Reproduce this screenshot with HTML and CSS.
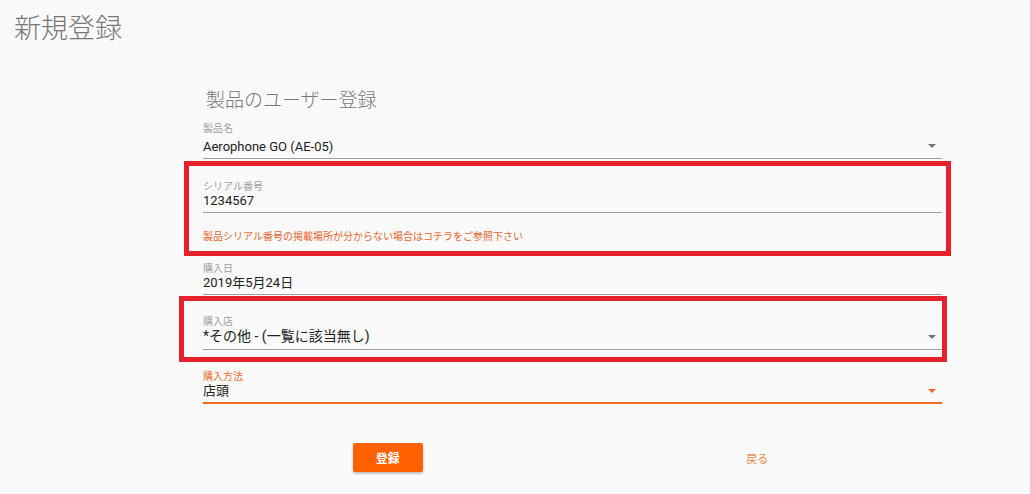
FILE: index.html
```html
<!DOCTYPE html>
<html lang="ja">
<head>
  <meta charset="UTF-8">
  <meta name="viewport" content="width=device-width, initial-scale=1.0">
  <title>新規登録</title>
  <link rel="stylesheet" href="styles.css">
</head>
<body>
  <div class="page">
    <h1 class="page-title">新規登録</h1>

    <form class="reg-form">
      <h2 class="form-title">製品のユーザー登録</h2>

      <div class="field field-first">
        <label class="field-label">製品名</label>
        <div class="field-value">
          <span>Aerophone GO (AE-05)</span>
          <span class="caret"></span>
        </div>
      </div>

      <div class="field field-serial">
        <label class="field-label">シリアル番号</label>
        <div class="field-value">
          <span>1234567</span>
        </div>
      </div>
      <p class="field-hint">製品シリアル番号の掲載場所が分からない場合はコチラをご参照下さい</p>

      <div class="field field-date">
        <label class="field-label">購入日</label>
        <div class="field-value">
          <span>2019年5月24日</span>
        </div>
      </div>

      <div class="field field-shop">
        <label class="field-label">購入店</label>
        <div class="field-value field-value-lg">
          <span>*その他 - (一覧に該当無し)</span>
          <span class="caret"></span>
        </div>
      </div>

      <div class="field field-method is-focused">
        <label class="field-label">購入方法</label>
        <div class="field-value">
          <span>店頭</span>
          <span class="caret"></span>
        </div>
      </div>

      <div class="form-actions">
        <div class="action-cell">
          <button type="button" class="btn-primary">登録</button>
        </div>
        <div class="action-cell">
          <a href="#" class="btn-flat">戻る</a>
        </div>
      </div>
    </form>

    <!-- annotation frames drawn over the form -->
    <div class="mark mark-serial"></div>
    <div class="mark mark-shop"></div>
  </div>
</body>
</html>
```

FILE: styles.css
```css
body {
  margin: 0;
  padding: 0;
  background-color: #fafafa;
  font-family: Roboto, "Noto Sans CJK JP", sans-serif;
  color: #212121;
}
.page {
  position: relative;
  min-height: 494px;
}
.page-title {
  margin: 0;
  padding: 13px 0 0 14px;
  font-size: 27px;
  line-height: 32px;
  font-weight: 300;
  color: #777;
}
.reg-form {
  width: 739px;
  margin-left: 203px;
}
.form-title {
  margin: 44px 0 0 3px;
  font-size: 19px;
  line-height: 24px;
  font-weight: 300;
  color: #777;
}
.field {
  padding-bottom: 3px;
  border-bottom: 1px solid #9e9e9e;
}
.field-label {
  display: block;
  font-size: 10px;
  line-height: 11px;
  color: #9e9e9e;
}
.field-value {
  display: flex;
  justify-content: space-between;
  align-items: center;
  font-size: 13px;
  line-height: 17px;
}
.field-value-lg {
  font-size: 14px;
  line-height: 19px;
}
.caret {
  width: 0;
  height: 0;
  margin-right: 6px;
  border-left: 4px solid transparent;
  border-right: 4px solid transparent;
  border-top: 4px solid #757575;
}
.field-first {
  margin-top: 10px;
}
.field-first .field-label {
  margin-bottom: 4px;
}
.field-first .caret {
  margin-bottom: 2px;
}
.field-serial {
  margin-top: 22px;
}
.field-hint {
  margin: 18px 0 0;
  font-size: 10px;
  line-height: 12px;
  color: #e8642a;
}
.field-date {
  margin-top: 20px;
}
.field-shop {
  margin-top: 21px;
}
.field-method {
  margin-top: 21px;
}
.is-focused {
  border-bottom: 2px solid #ee6a1e;
}
.is-focused .field-label {
  color: #ee6a1e;
}
.is-focused .caret {
  border-top-color: #ee6a1e;
}
.form-actions {
  display: grid;
  grid-template-columns: 1fr 1fr;
  align-items: center;
  margin-top: 39px;
}
.action-cell {
  display: flex;
  justify-content: center;
}
.btn-primary {
  width: 70px;
  height: 29px;
  border: none;
  border-radius: 2px;
  background-color: #ff6000;
  color: #fff;
  font-family: Roboto, "Noto Sans CJK JP", sans-serif;
  font-size: 12px;
  font-weight: 700;
  box-shadow: 0 2px 2px rgba(0, 0, 0, 0.22);
}
.btn-flat {
  font-size: 11px;
  color: #f08a50;
  text-decoration: none;
}
.mark {
  position: absolute;
  border: 5px solid #e5222b;
}
.mark-serial {
  left: 184px;
  top: 161px;
  width: 757px;
  height: 85px;
}
.mark-shop {
  left: 179px;
  top: 296px;
  width: 758px;
  height: 56px;
}
```
